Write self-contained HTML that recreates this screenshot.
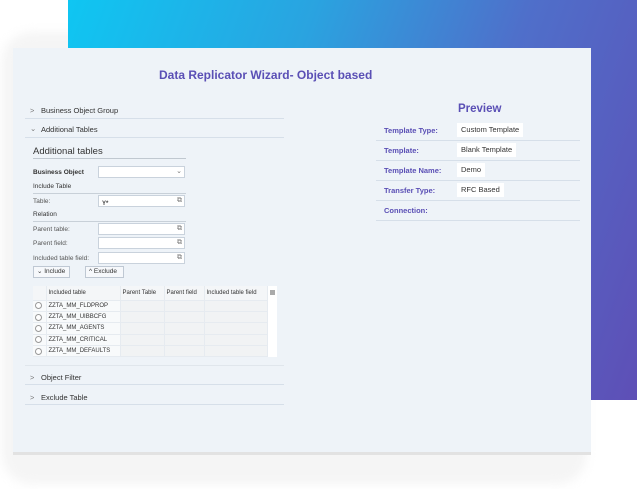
<!DOCTYPE html>
<html><head><style>
*{margin:0;padding:0;box-sizing:border-box}
body{width:637px;height:489px;background:#fff;position:relative;overflow:hidden;font-family:"Liberation Sans",sans-serif;color:#444}
.grad{position:absolute;left:68px;top:0;width:569px;height:400px;background:linear-gradient(110deg,#0fc6f2 0%,#2aa3e0 35%,#4f6fca 65%,#5e4fb6 100%)}
.shadow{position:absolute;left:2px;top:32px;width:585px;height:452px;border-radius:30px;background:#f5f5f5;filter:blur(5px)}
.card{position:absolute;left:13px;top:48px;width:578px;height:404px;background:#eef3f8;box-shadow:0 3px 0 #e2e2e2}
.a{position:absolute;white-space:nowrap}
.title{left:146px;top:20px;font-size:12px;font-weight:bold;color:#5a4fb5}
.acc{font-size:7.5px;color:#333}
.line{position:absolute;height:1px;background:#d6dfe9}
.lbl{font-size:6.5px;color:#555}
.blbl{font-size:6.5px;color:#333;font-weight:bold}
.in{position:absolute;background:#fff;border:1px solid #c9d2dc;height:12px;width:87px;line-height:10px}
.ic{position:absolute;right:2px;top:0;font-size:7px;color:#777;line-height:10px}
.btn{position:absolute;height:12px;border:1px solid #bfc8d3;background:#f6f8fb;font-size:6.5px;color:#333;padding:0 3px;line-height:10px}
table{position:absolute;left:20px;top:238px;border-collapse:collapse;font-size:6px;color:#333}
td{height:11.4px;border-bottom:1px solid #e6ebf0;border-right:1px solid #e6ebf0;background:#f1f3f4;padding:0 2px;white-space:nowrap}
td.w{background:#f8fafb}
tr.h td{height:14px;background:#f4f6f8}
.r{display:inline-block;width:7px;height:7px;border:1px solid #999;border-radius:50%;background:#fff;vertical-align:middle}
.pl{font-size:7.5px;font-weight:bold;color:#5a4fb5}
.pv{position:absolute;background:#fff;font-size:7.5px;color:#333;padding:0 4px;height:14px;line-height:14px}
</style></head><body>
<div class="shadow"></div>
<div class="grad"></div>
<div class="card">
<div class="a title">Data Replicator Wizard- Object based</div>

<div class="a acc" style="left:17px;top:58px;color:#777">&gt;</div>
<div class="a acc" style="left:28px;top:58px">Business Object Group</div>
<div class="line" style="left:12px;top:70px;width:259px"></div>
<div class="a acc" style="left:17px;top:76px;color:#777">⌄</div>
<div class="a acc" style="left:28px;top:77px">Additional Tables</div>
<div class="line" style="left:12px;top:89px;width:259px"></div>

<div class="a" style="left:20px;top:98px;font-size:9.5px;color:#333">Additional tables</div>
<div class="line" style="left:20px;top:110px;width:153px;background:#c0c8d0"></div>
<div class="a blbl" style="left:20px;top:121px">Business Object</div>
<div class="in" style="left:85px;top:118px"><span class="ic">⌄</span></div>
<div class="a blbl" style="left:20px;top:135px;font-weight:normal;color:#333">Include Table</div>
<div class="line" style="left:20px;top:145px;width:153px;background:#c8d0d8"></div>
<div class="a lbl" style="left:20px;top:150px">Table:</div>
<div class="in" style="left:85px;top:147px"><span style="font-size:6px;margin-left:3px;font-weight:bold">Y*</span><span class="ic">⧉</span></div>
<div class="a blbl" style="left:20px;top:163px;font-weight:normal;color:#333">Relation</div>
<div class="line" style="left:20px;top:173px;width:153px;background:#c8d0d8"></div>
<div class="a lbl" style="left:20px;top:178px">Parent table:</div>
<div class="in" style="left:85px;top:175px"><span class="ic">⧉</span></div>
<div class="a lbl" style="left:20px;top:192px">Parent field:</div>
<div class="in" style="left:85px;top:189px"><span class="ic">⧉</span></div>
<div class="a lbl" style="left:20px;top:207px">Included table field:</div>
<div class="in" style="left:85px;top:204px"><span class="ic">⧉</span></div>
<div class="btn" style="left:20px;top:218px;width:37px">⌄ Include</div>
<div class="btn" style="left:72px;top:218px;width:39px">^ Exclude</div>

<table>
<tr class="h"><td style="width:13px"></td><td style="width:74px">Included table</td><td style="width:44px">Parent Table</td><td style="width:40px">Parent field</td><td style="width:63px">Included table field</td><td style="width:7px;background:#fff;border:none"><span style="display:inline-block;width:5px;height:5px;background:#aaa"></span></td></tr>
<tr><td class="w"><span class="r"></span></td><td class="w">ZZTA_MM_FLDPROP</td><td></td><td></td><td></td><td style="background:#fff;border:none"></td></tr>
<tr><td class="w"><span class="r"></span></td><td class="w">ZZTA_MM_UIBBCFG</td><td></td><td></td><td></td><td style="background:#fff;border:none"></td></tr>
<tr><td class="w"><span class="r"></span></td><td class="w">ZZTA_MM_AGENTS</td><td></td><td></td><td></td><td style="background:#fff;border:none"></td></tr>
<tr><td class="w"><span class="r"></span></td><td class="w">ZZTA_MM_CRITICAL</td><td></td><td></td><td></td><td style="background:#fff;border:none"></td></tr>
<tr><td class="w"><span class="r"></span></td><td class="w">ZZTA_MM_DEFAULTS</td><td></td><td></td><td></td><td style="background:#fff;border:none"></td></tr>
</table>

<div class="line" style="left:12px;top:317px;width:259px;background:#e0e6ec"></div>
<div class="a acc" style="left:17px;top:325px;color:#777">&gt;</div>
<div class="a acc" style="left:28px;top:325px">Object Filter</div>
<div class="line" style="left:12px;top:336px;width:259px"></div>
<div class="a acc" style="left:17px;top:345px;color:#777">&gt;</div>
<div class="a acc" style="left:28px;top:345px">Exclude Table</div>
<div class="line" style="left:12px;top:356px;width:259px"></div>

<div class="a" style="left:445px;top:55px;font-size:11.5px;font-weight:bold;color:#5a4fb5">Preview</div>
<div class="a pl" style="left:371px;top:78px">Template Type:</div>
<div class="pv" style="left:444px;top:75px">Custom Template</div>
<div class="line" style="left:363px;top:92px;width:204px"></div>
<div class="a pl" style="left:371px;top:98px">Template:</div>
<div class="pv" style="left:444px;top:95px">Blank Template</div>
<div class="line" style="left:363px;top:112px;width:204px"></div>
<div class="a pl" style="left:371px;top:118px">Template Name:</div>
<div class="pv" style="left:444px;top:115px">Demo</div>
<div class="line" style="left:363px;top:132px;width:204px"></div>
<div class="a pl" style="left:371px;top:138px">Transfer Type:</div>
<div class="pv" style="left:444px;top:135px">RFC Based</div>
<div class="line" style="left:363px;top:152px;width:204px"></div>
<div class="a pl" style="left:371px;top:158px">Connection:</div>
<div class="line" style="left:363px;top:172px;width:204px"></div>
</div>
</body></html>
